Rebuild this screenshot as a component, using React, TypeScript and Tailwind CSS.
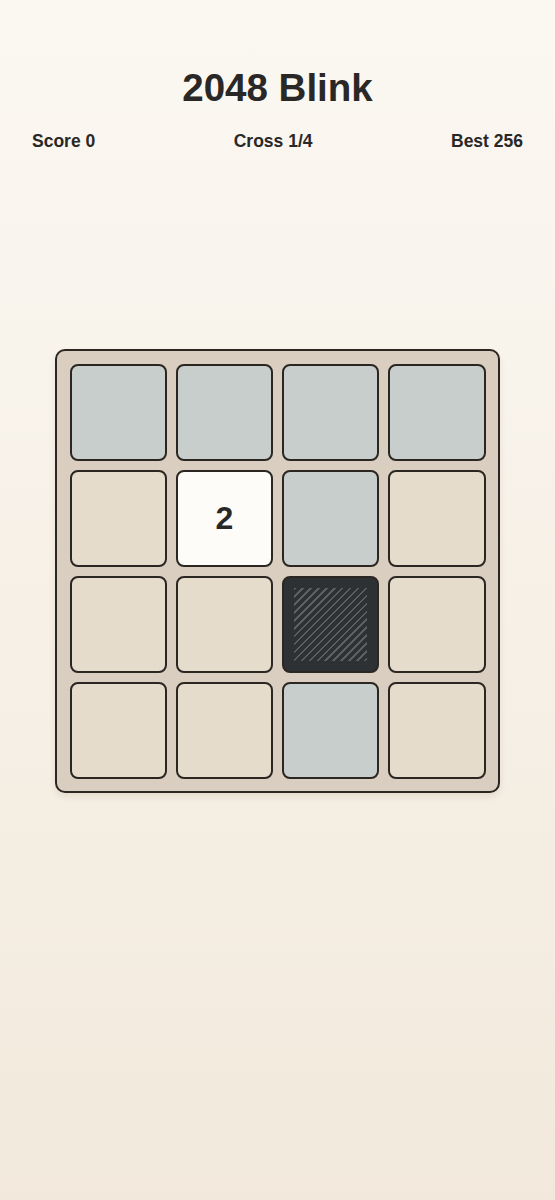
import React from "react";

type Cell = "grey" | "beige" | "white" | "dark";

const board: { kind: Cell; value?: number }[][] = [
  [{ kind: "grey" }, { kind: "grey" }, { kind: "grey" }, { kind: "grey" }],
  [{ kind: "beige" }, { kind: "white", value: 2 }, { kind: "grey" }, { kind: "beige" }],
  [{ kind: "beige" }, { kind: "beige" }, { kind: "dark" }, { kind: "beige" }],
  [{ kind: "beige" }, { kind: "beige" }, { kind: "grey" }, { kind: "beige" }],
];

const tileBg: Record<Cell, string> = {
  grey: "bg-[#c8cecb]",
  beige: "bg-[#e5dccc]",
  white: "bg-[#fdfcf8]",
  dark: "bg-[#2e3133]",
};

function Tile({ kind, value }: { kind: Cell; value?: number }) {
  return (
    <div
      className={`h-[97px] rounded-[8px] border-2 border-[#2b2622] flex items-center justify-center ${tileBg[kind]}`}
    >
      {kind === "dark" && (
        <div className="w-[73px] h-[73px] bg-[image:repeating-linear-gradient(135deg,#5b5f61_0px,#5b5f61_1.7px,transparent_1.7px,transparent_5.6px)]" />
      )}
      {value !== undefined && (
        <span className="text-[32px] leading-none font-bold text-[#2a2826]">{value}</span>
      )}
    </div>
  );
}

export default function App() {
  return (
    <div className="min-h-screen bg-gradient-to-b from-[#fbf8f2] to-[#f2e9dc] font-['Liberation_Sans',Arial,sans-serif] text-[#2a2826]">
      <h1 className="pt-[69px] text-center text-[38.5px] leading-none font-bold">2048 Blink</h1>
      <div className="mt-[25px] px-[32px] flex justify-between text-[17.5px] leading-none font-bold">
        <span>Score 0</span>
        <span>Cross 1/4</span>
        <span>Best 256</span>
      </div>
      <div className="mt-[199px] mx-auto w-[445px] rounded-[10px] border-[2.5px] border-[#2b2622] bg-[#d9cec0] p-[12.5px] grid grid-cols-4 gap-[9px] shadow-[0_4px_6px_rgba(120,100,70,0.12)]">
        {board.flat().map((c, i) => (
          <Tile key={i} kind={c.kind} value={c.value} />
        ))}
      </div>
    </div>
  );
}
